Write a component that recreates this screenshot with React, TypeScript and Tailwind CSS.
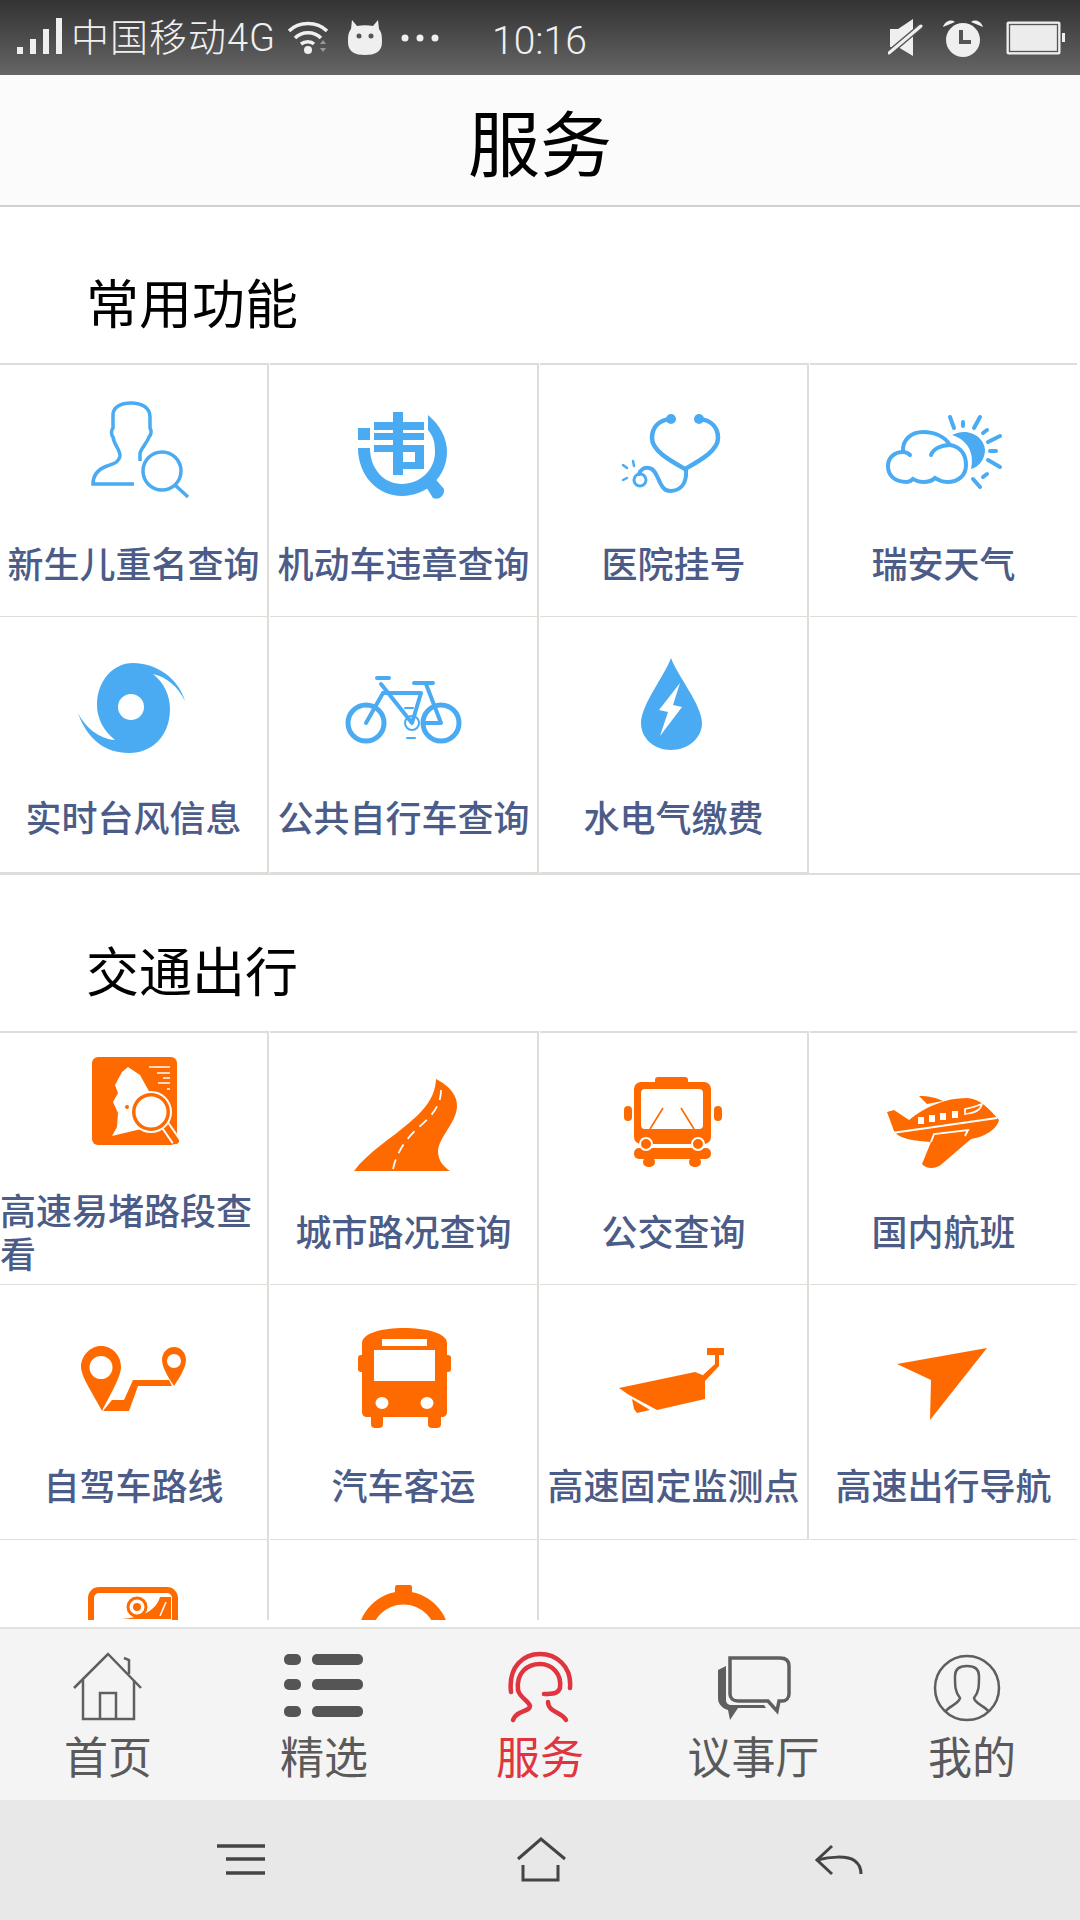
import type { ReactNode } from 'react'

const BLUE = '#4aabf2'
const ORANGE = '#ff6a00'
const GREY = '#5f5f5f'
const RED = '#e0343e'

function Box({ children }: { children: ReactNode }) {
  return (
    <svg width="118" height="118" viewBox="0 0 118 118" className="overflow-visible shrink-0 mt-[30px]">
      {children}
    </svg>
  )
}

const PersonSearch = () => (
  <Box>
    <g fill="none" stroke={BLUE} strokeWidth="3.5">
      <path d="M59 89H18C18 79 24 74 32 71C40 68 44 67 45 61C45 54 39 50 38 42C36 40 36 35 38 33V20C38 12 46 8 56 8C66 8 75 12 75 22V33C77 36 76 40 74 42C72 48 67 52 65 58V66" />
      <circle cx="87" cy="76" r="19" />
      <path d="M100 90L113 102" />
    </g>
  </Box>
)

const ViolationSearch = () => (
  <Box>
    <g fill={BLUE}>
      <path d="M83 20C95 30 102 43 102 57C102 81 82 101 57 101C33 101 13 81 13 53H25C25 74 39 89 57 89C75 89 90 75 90 57C90 46 88 41 83 35Z" />
      <path d="M78 87L87 80L99 94C100 100 94 106 88 103Z" />
      <rect x="13" y="33" width="12" height="12" />
      <rect x="48" y="17" width="10" height="63" />
      <rect x="29" y="27" width="50" height="8" />
      <rect x="29" y="38" width="50" height="7" />
      <rect x="29" y="50" width="50" height="7" />
      <rect x="70" y="50" width="9" height="24" />
      <rect x="58" y="67" width="21" height="7" />
    </g>
  </Box>
)

const Stethoscope = () => (
  <Box>
    <g fill="none" stroke={BLUE} strokeWidth="4.5" strokeLinecap="round">
      <path d="M56 24C44 25 37 32 37 43C37 56 56 66 70 74C84 66 103 56 103 43C103 32 96 25 84 24" />
      <path d="M71 75C72 88 66 96 55 96C43 96 44 74 34 73C30 72 26 74 24 79" strokeWidth="4" />
      <circle cx="25" cy="85" r="6" strokeWidth="3" />
      <path d="M8 70L12 73M8 85L12 83M18 66L19 71" strokeWidth="2.5" />
    </g>
    <circle cx="56" cy="24" r="5" fill={BLUE} />
    <circle cx="84" cy="24" r="5" fill={BLUE} />
  </Box>
)

const CloudSun = () => (
  <Box>
    <g fill="none" stroke={BLUE} strokeWidth="4" strokeLinecap="round">
      <path d="M22 87C9 87 3 80 3 71C3 63 9 57 18 57C17 45 26 37 38 37C50 37 60 42 65 50C76 52 81 60 81 70C81 80 74 87 62 87C56 87 54 85 50 83C46 87 42 87 38 87C32 87 30 85 28 84C26 86 24 87 22 87Z" />
      <path d="M46 60C48 54 56 50 65 50M18 57C20 57 23 58 25 60" />
      <path d="M65 22L69 33M78 27V31M95 22L89 33M102 35L98 38M115 41L103 47M111 56H105M115 72L103 65M102 79L98 82M88 84L95 92" />
    </g>
    <path d="M67 40C85 31 100 44 100 55C100 64 94 72 86 74C89 62 86 46 67 40Z" fill={BLUE} />
  </Box>
)

const Typhoon = () => (
  <Box>
    <path
      fillRule="evenodd"
      d="M58 16C80 16 103 30 110 54C103 40 92 30 78 27C89 36 95 48 95 62C95 88 78 106 54 106C30 106 12 92 3 66C10 80 24 92 40 93C29 84 22 72 22 58C22 34 38 16 58 16ZM56 47A13 13 0 1 0 56 73A13 13 0 1 0 56 47Z"
      fill={BLUE}
    />
  </Box>
)

const Bike = () => (
  <Box>
    <g fill="none" stroke={BLUE} strokeLinecap="round" strokeLinejoin="round">
      <circle cx="21" cy="76" r="18" strokeWidth="5" />
      <circle cx="96" cy="76" r="18" strokeWidth="5" />
      <path d="M38 46H76L67 76L36 37M21 76L38 46M69 36H88M81 37L96 76H78M32 31H44" strokeWidth="4" />
      <circle cx="67" cy="76" r="7" strokeWidth="2" />
      <path d="M60 61H68M62 91H70" strokeWidth="2" />
    </g>
  </Box>
)

const Drop = () => (
  <Box>
    <path d="M56 11C50 28 26 58 26 76C26 92 40 103 56 103C72 103 87 92 87 76C87 58 62 28 56 11Z" fill={BLUE} />
    <path d="M65 36L44 63L53 65L45 89L67 60L58 58Z" fill="#fff" />
  </Box>
)

const MapSearch = () => (
  <Box>
    <rect x="17" y="-6" width="85" height="88" rx="6" fill={ORANGE} />
    <path d="M53 4L47 9L40 22L43 30L38 39L43 50L42 64L37 73L62 67L85 64L75 30L65 12Z" fill="#fff" />
    <path d="M74 4H95M82 10H95M88 15H95M83 20H95M92 26H95" stroke="#fff" strokeWidth="1.6" />
    <circle cx="52" cy="44" r="2" fill={ORANGE} />
    <path d="M90 62L101 78" stroke="#fff" strokeWidth="10" />
    <path d="M90 62L101 78" stroke={ORANGE} strokeWidth="6" strokeLinecap="round" />
    <circle cx="76" cy="49" r="21" fill="#fff" />
    <circle cx="76" cy="49" r="19" fill={ORANGE} />
    <circle cx="76" cy="49" r="15.5" fill="#fff" />
  </Box>
)

const Road = () => (
  <Box>
    <path d="M91 16C103 22 113 32 112 44C111 60 94 74 93 88C93 98 99 104 105 108H9C22 90 48 74 64 60C78 48 90 36 91 16Z" fill={ORANGE} />
    <path d="M96 27C96 45 84 55 72 66C62 75 52 88 48 106" fill="none" stroke="#fff" strokeWidth="1.8" strokeDasharray="10 7" />
  </Box>
)

const CityBus = () => (
  <Box>
    <g fill={ORANGE}>
      <rect x="40" y="14" width="33" height="8" rx="3" />
      <rect x="19" y="19" width="77" height="62" rx="7" />
      <rect x="19" y="85" width="77" height="11" rx="5" />
      <rect x="28" y="94" width="12" height="10" rx="5" />
      <rect x="74" y="94" width="12" height="10" rx="5" />
      <rect x="9" y="43" width="8" height="15" rx="4" />
      <rect x="99" y="43" width="8" height="15" rx="4" />
    </g>
    <rect x="26" y="26" width="62" height="40" rx="4" fill="#fff" />
    <path d="M48 45L35 66M66 45L79 66" stroke={ORANGE} strokeWidth="1.6" />
    <circle cx="31" cy="81" r="6" fill={ORANGE} stroke="#fff" strokeWidth="2" />
    <circle cx="83" cy="81" r="6" fill={ORANGE} stroke="#fff" strokeWidth="2" />
  </Box>
)

const Plane = () => (
  <Box>
    <path d="M34 33C44 33 52 35 58 38L42 41Z" fill={ORANGE} />
    <path d="M2 49L9 47L24 57C40 44 60 35 82 35C96 36 104 46 114 57C112 66 100 74 86 76L58 100C52 106 42 107 37 101L46 79C30 78 14 76 9 68Z" fill={ORANGE} />
    <path d="M7 70L112 55" stroke="#fff" strokeWidth="1.8" fill="none" />
    <path d="M46 79L49 71L83 67L80 73" stroke="#fff" strokeWidth="1.8" fill="none" />
    <g fill="#fff">
      <rect x="33" y="54" width="6" height="7" />
      <rect x="44" y="52" width="6" height="7" />
      <rect x="55" y="50" width="6" height="7" />
      <rect x="67" y="48" width="6" height="7" />
    </g>
    <path d="M80 51V46C86 45 92 43 97 41C96 46 90 50 80 51Z" fill="none" stroke="#fff" strokeWidth="1.6" />
  </Box>
)

const RoutePins = () => (
  <Box>
    <path fillRule="evenodd" d="M26 31C38 31 46 41 46 52C46 62 34 82 27 96C20 82 6 62 6 52C6 41 15 31 26 31ZM26 41A11.5 11.5 0 1 0 26 64A11.5 11.5 0 1 0 26 41Z" fill={ORANGE} />
    <path fillRule="evenodd" d="M99 32C106 32 111 38 111 45C111 52 105 62 99 71C93 62 87 52 87 45C87 38 92 32 99 32ZM99 39A7 7 0 1 0 99 53A7 7 0 1 0 99 39Z" fill={ORANGE} />
    <path d="M28 96L37 85H49L58 65H94L97 71H63L54 96Z" fill={ORANGE} />
  </Box>
)

const BigBus = () => (
  <Box>
    <g fill={ORANGE}>
      <path d="M17 28C17 18 38 13 59 13C80 13 102 18 102 28V97C102 100 100 102 97 102H22C19 102 17 100 17 97Z" />
      <rect x="26" y="98" width="12" height="15" rx="4" />
      <rect x="83" y="98" width="13" height="15" rx="4" />
      <rect x="13" y="40" width="8" height="17" rx="3" />
      <rect x="98" y="40" width="8" height="17" rx="3" />
    </g>
    <rect x="37" y="24" width="45" height="7" fill="#fff" />
    <rect x="29" y="35" width="61" height="31" fill="#fff" />
    <ellipse cx="37" cy="88" rx="6.5" ry="6" fill="#fff" />
    <ellipse cx="82" cy="88" rx="6.5" ry="6" fill="#fff" />
  </Box>
)

const Camera = () => (
  <Box>
    <g fill={ORANGE}>
      <path d="M4 73L80 57L90 61V84L42 95L14 80Z" />
      <path d="M17 84L35 95L22 98L19 94Z" />
      <path d="M88 60L100 49V40H92V33H109V40H104V51L90 66Z" />
    </g>
  </Box>
)

const NavArrow = () => (
  <Box>
    <path d="M102 33L12 49L46 65L45 105Z" fill={ORANGE} />
  </Box>
)

const CameraRoad = () => (
  <Box>
    <rect x="16" y="20" width="84" height="60" rx="8" fill="none" stroke={ORANGE} strokeWidth="6" />
    <circle cx="62" cy="37" r="9" fill="none" stroke={ORANGE} strokeWidth="3" />
    <circle cx="62" cy="37" r="4" fill={ORANGE} />
    <path d="M85 27C82 38 70 48 45 49H96V27Z" fill={ORANGE} />
    <path d="M91 32L85 46" stroke="#fff" strokeWidth="1.5" />
  </Box>
)

const RingIcon = () => (
  <Box>
    <rect x="50" y="15" width="17" height="10" rx="2" fill={ORANGE} />
    <circle cx="58.5" cy="67" r="39" fill="none" stroke={ORANGE} strokeWidth="13" />
  </Box>
)

function Cell({ label, icon, height, top, last }: { label?: string; icon?: ReactNode; height: string; top?: boolean; last?: boolean }) {
  if (!icon) return <div className={height} />
  return (
    <div className={`${height} ${top ? 'border-t-2' : ''} ${last ? 'mr-[3px] border-b' : 'mr-px border-r-2 border-b'} border-[#dfddd8] flex flex-col items-center`}>
      {icon}
      {label && (
        <div className="flex-1 w-full flex items-center justify-center pt-[4px] text-[36px] leading-[43px] font-medium text-[#4c5c88]">
          <span className="block">{label}</span>
        </div>
      )}
    </div>
  )
}

function SectionTitle({ children }: { children: string }) {
  return <div className="h-[156px] pl-[86px] pb-[30px] flex items-end text-[53px] leading-[53px] text-black">{children}</div>
}

function Tab({ label, icon, active, labelClass = '' }: { label: string; icon: ReactNode; active?: boolean; labelClass?: string }) {
  return (
    <div className="flex flex-col items-center">
      <svg width="100" height="72" viewBox="0 0 100 72" className="overflow-visible">{icon}</svg>
      <div className={`mt-[13px] text-[44px] leading-[48px] ${labelClass} ${active ? 'text-[#e0343e]' : 'text-[#5a5a5a]'}`}>{label}</div>
    </div>
  )
}

export default function App() {
  return (
    <div className="w-[1080px] h-[1920px] overflow-hidden flex flex-col bg-white font-['Roboto','Noto_Sans_CJK_SC',sans-serif]">
      {/* status bar */}
      <div className="h-[75px] shrink-0 flex items-center bg-gradient-to-b from-[#333333] to-[#666666] text-[#f0f0f0]">
        <svg width="46" height="40" viewBox="0 0 46 40" className="ml-[17px]" fill="#efefef">
          <rect x="0" y="29" width="6" height="7" />
          <rect x="13" y="21" width="6" height="15" />
          <rect x="26" y="11" width="6" height="25" />
          <rect x="39" y="0" width="6" height="36" />
        </svg>
        <span className="ml-[8px] text-[38px] leading-[40px] font-light tracking-[1px]">中国移动4G</span>
        <svg width="42" height="36" viewBox="0 0 42 36" className="ml-[11px]" fill="none" stroke="#efefef" strokeWidth="3.5">
          <path d="M2 11C12 1 30 1 40 11M8 18C15 11 27 11 34 18M14 24C18 21 24 21 27 24" />
          <circle cx="21" cy="30" r="4" fill="#efefef" stroke="none" />
          <path d="M33 24L36 20L39 24ZM33 28H39L36 32Z" fill="#999" stroke="none" />
        </svg>
        <svg width="36" height="36" viewBox="0 0 36 36" className="ml-[18px]">
          <path d="M5 0L10 6C15 5 21 5 26 6L31 0L32 9C35 13 35 17 35 22C35 32 28 35 18 35C8 35 1 32 1 22C1 17 1 13 4 9Z" fill="#efefef" />
          <circle cx="12" cy="16" r="2.5" fill="#555" />
          <circle cx="24" cy="16" r="2.5" fill="#555" />
        </svg>
        <svg width="38" height="10" viewBox="0 0 38 10" className="ml-[18px]" fill="#efefef">
          <circle cx="4" cy="5" r="3.5" />
          <circle cx="19" cy="5" r="3.5" />
          <circle cx="34" cy="5" r="3.5" />
        </svg>
        <span className="ml-[53px] mt-[6px] text-[39px] leading-[40px] font-light">10:16</span>
        <svg width="36" height="38" viewBox="0 0 36 38" className="ml-auto" fill="#efefef">
          <path d="M2 10H10L25 0V37L10 28H2Z" />
          <path d="M1 34L33 7" stroke="#555" strokeWidth="6" />
          <path d="M1 34L33 7" stroke="#efefef" strokeWidth="3" strokeLinecap="round" />
        </svg>
        <svg width="42" height="38" viewBox="0 0 42 38" className="ml-[18px]" fill="#efefef">
          <circle cx="21" cy="21" r="17" />
          <path d="M1 8C3 2 9 0 13 3ZM41 8C39 2 33 0 29 3Z" />
          <path d="M19 11V23H29" fill="none" stroke="#555" strokeWidth="4" />
        </svg>
        <svg width="60" height="34" viewBox="0 0 60 34" className="ml-[22px] mr-[14px]">
          <rect x="0.5" y="0.5" width="54" height="33" rx="2" fill="#efefef" />
          <rect x="3.5" y="3.5" width="48" height="27" fill="#ececec" stroke="#555" strokeWidth="1.3" />
          <rect x="56" y="12" width="3" height="9" fill="#efefef" />
        </svg>
      </div>

      {/* title */}
      <div className="h-[132px] shrink-0 flex items-center justify-center pt-[14px] bg-[#fbfbfb] border-b-2 border-[#cfcfcf] text-[72px] leading-[80px] text-black">服务</div>

      {/* list */}
      <div className="h-[1413px] shrink-0 overflow-hidden">
        <div className="border-b-2 border-[#dddddd]">
          <SectionTitle>常用功能</SectionTitle>
          <div className="grid grid-cols-4">
            <Cell top height="h-[254px]" label="新生儿重名查询" icon={<PersonSearch />} />
            <Cell top height="h-[254px]" label="机动车违章查询" icon={<ViolationSearch />} />
            <Cell top height="h-[254px]" label="医院挂号" icon={<Stethoscope />} />
            <Cell top last height="h-[254px]" label="瑞安天气" icon={<CloudSun />} />
            <Cell height="h-[256px]" label="实时台风信息" icon={<Typhoon />} />
            <Cell height="h-[256px]" label="公共自行车查询" icon={<Bike />} />
            <Cell height="h-[256px]" label="水电气缴费" icon={<Drop />} />
            <Cell height="h-[256px]" />
          </div>
        </div>
        <SectionTitle>交通出行</SectionTitle>
        <div className="grid grid-cols-4">
          <Cell top height="h-[254px]" label="高速易堵路段查看" icon={<MapSearch />} />
          <Cell top height="h-[254px]" label="城市路况查询" icon={<Road />} />
          <Cell top height="h-[254px]" label="公交查询" icon={<CityBus />} />
          <Cell top last height="h-[254px]" label="国内航班" icon={<Plane />} />
          <Cell height="h-[255px]" label="自驾车路线" icon={<RoutePins />} />
          <Cell height="h-[255px]" label="汽车客运" icon={<BigBus />} />
          <Cell height="h-[255px]" label="高速固定监测点" icon={<Camera />} />
          <Cell last height="h-[255px]" label="高速出行导航" icon={<NavArrow />} />
          <Cell height="h-[254px]" icon={<CameraRoad />} />
          <Cell height="h-[254px]" icon={<RingIcon />} />
        </div>
      </div>
      <div className="h-[7px] shrink-0 bg-white" />

      {/* tab bar */}
      <div className="h-[173px] shrink-0 grid grid-cols-5 pt-[21px] bg-[#f4f4f4] border-t-2 border-[#e2e2e2]">
        <Tab
          label="首页"
          icon={
            <g fill="none" stroke={GREY} strokeWidth="2.5">
              <path d="M16 38L50 4L83 38M66 8L71 10V24" />
              <path d="M25 30V69H76V30M42 69V43H58V69" />
            </g>
          }
        />
        <Tab
          label="精选"
          icon={
            <g fill="#555555">
              <rect x="10" y="4" width="17" height="11" rx="5" />
              <rect x="38" y="4" width="51" height="11" rx="5" />
              <rect x="10" y="29" width="17" height="11" rx="5" />
              <rect x="38" y="29" width="51" height="11" rx="5" />
              <rect x="10" y="56" width="17" height="11" rx="5" />
              <rect x="38" y="56" width="51" height="11" rx="5" />
            </g>
          }
        />
        <Tab
          active
          label="服务"
          icon={
            <g fill="none" stroke={RED} strokeWidth="4.5" strokeLinecap="round">
              <path d="M21 42C18 16 34 4 50 4C66 4 82 16 80 38" />
              <path d="M28 40C26 22 38 14 50 14C62 14 72 24 70 38C68 44 62 44 54 44" />
              <path d="M28 40C30 48 38 50 40 56C40 62 26 60 23 70" />
              <path d="M58 52C58 62 72 62 76 70" />
            </g>
          }
        />
        <Tab
          label="议事厅"
          labelClass="mr-[5px]"
          icon={
            <g>
              <path d="M24 8H74C80 8 83 11 83 16V44C83 48 80 51 76 51H73L71 61L62 51H32C27 51 24 48 24 44Z" fill="none" stroke={GREY} strokeWidth="3.5" />
              <path d="M12 20L20 16V50C20 53 22 55 26 55H58L60 58H32L24 70L22 60C16 58 12 54 12 48Z" fill={GREY} />
            </g>
          }
        />
        <Tab
          label="我的"
          icon={
            <g fill="none" stroke={GREY} strokeWidth="2.5" transform="translate(-5 0)">
              <ellipse cx="50" cy="38" rx="32" ry="32" />
              <path d="M28 62C32 56 42 54 43 48C38 42 38 36 38 26C38 18 44 16 50 16C56 16 62 18 62 26C62 36 62 42 57 48C58 54 68 56 72 62" />
            </g>
          }
        />
      </div>

      {/* android nav */}
      <div className="flex-1 flex items-center justify-between px-[211px] bg-[#e8e8e8]">
        <svg width="60" height="60" viewBox="0 0 60 60" fill="none" stroke="#444444" strokeWidth="3.5">
          <path d="M6 16H54M15 29H54M15 43H54" />
        </svg>
        <svg width="60" height="60" viewBox="0 0 60 60" fill="none" stroke="#444444" strokeWidth="3">
          <path d="M8 29L31 9L55 29M13 35V50H48V35" />
        </svg>
        <svg width="60" height="60" viewBox="0 0 60 60" fill="none" stroke="#444444" strokeWidth="3">
          <path d="M23 16L8 30L23 44" />
          <path d="M8 30C20 27 38 25 46 31C50 34 52 38 52 44" />
        </svg>
      </div>
    </div>
  )
}
